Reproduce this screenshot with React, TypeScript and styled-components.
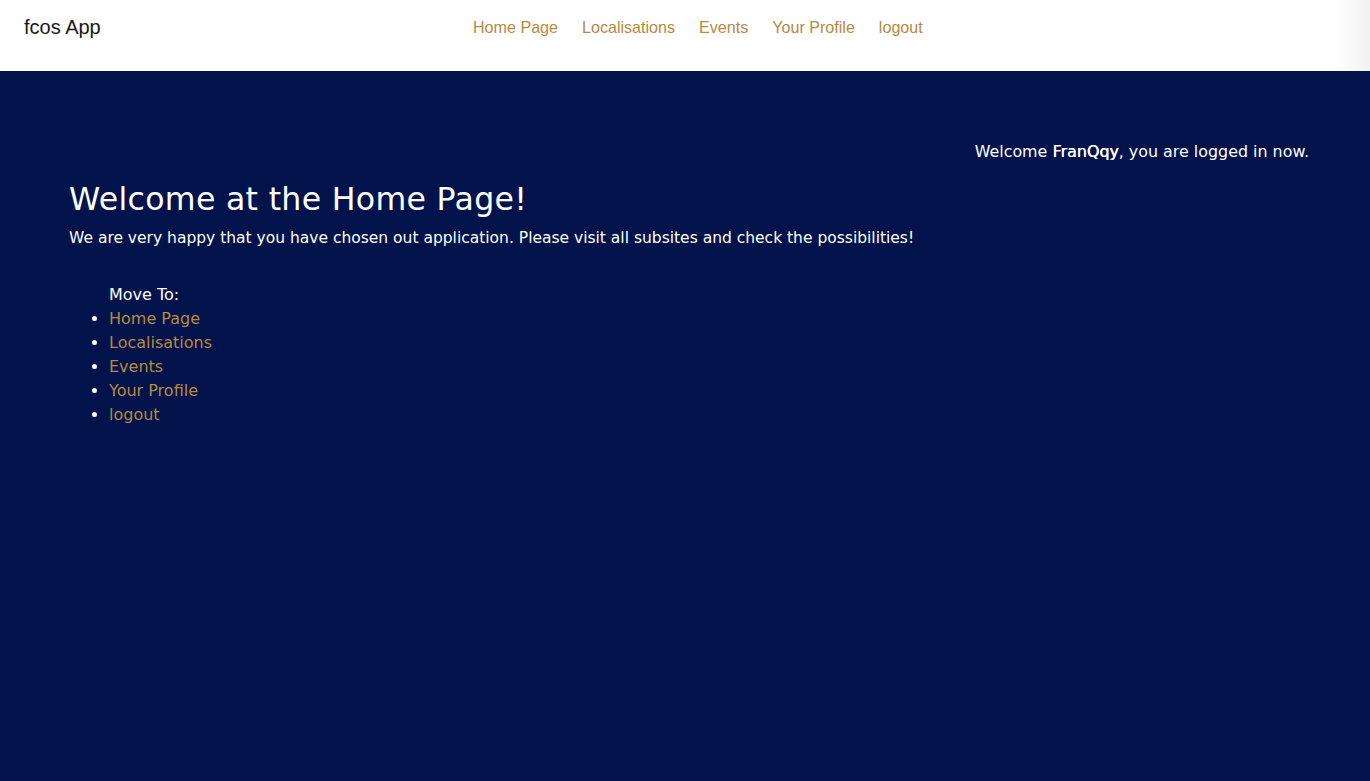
import React from "react";
import styled, { createGlobalStyle } from "styled-components";

const Global = createGlobalStyle`
  html, body { margin: 0; padding: 0; }
  body { background: #02134c; }
  * { box-sizing: border-box; }
`;

const Page = styled.div`
  min-height: 781px;
  display: flex;
  flex-direction: column;
  background: #02134c;
`;

const Header = styled.header`
  height: 71px;
  background: linear-gradient(to right, #ffffff 0, #ffffff 1335px, #f2f2f2 1370px);
  display: flex;
  align-items: center;
  padding: 0 0 0 24px;
  font-family: "Liberation Sans", Arial, sans-serif;
`;

const Brand = styled.div`
  color: #1a1a1a;
  font-size: 20px;
  width: 449px;
  padding-bottom: 16px;
`;

const Nav = styled.nav`
  display: flex;
  gap: 24px;
  padding-bottom: 16px;
`;

const NavLink = styled.a`
  color: #b68a3e;
  font-size: 16.1px;
  text-decoration: none;
`;

const Main = styled.main`
  flex: 1;
  padding: 71px 61px 0 69px;
  font-family: "DejaVu Sans", Verdana, sans-serif;
  color: #ffffff;
`;

const Greeting = styled.div`
  text-align: right;
  font-size: 15.9px;
  line-height: 20px;
`;

const Strong = styled.span`
  font-weight: 400;
  text-shadow: 0.4px 0 0 #ffffff;
`;

const Title = styled.h1`
  margin: 15px 0 0;
  font-weight: 400;
  font-size: 31.6px;
  line-height: 44px;
  letter-spacing: 0.3px;
`;

const Lead = styled.p`
  margin: 5px 0 0;
  font-size: 15.5px;
  line-height: 24px;
`;

const List = styled.ul`
  margin: 33px 0 0;
  padding-left: 40px;
  font-size: 16px;
  line-height: 24px;
`;

const ListHead = styled.div`
  color: #ffffff;
`;

const Item = styled.li`
  color: #ffffff;
`;

const ItemLink = styled.a`
  color: #b68a3e;
  text-decoration: none;
`;

const links = ["Home Page", "Localisations", "Events", "Your Profile", "logout"];

export default function App() {
  return (
    <Page>
      <Global />
      <Header>
        <Brand>fcos App</Brand>
        <Nav>
          {links.map((l) => (
            <NavLink key={l} href="#">{l}</NavLink>
          ))}
        </Nav>
      </Header>
      <Main>
        <Greeting>
          Welcome <Strong>FranQqy</Strong>, you are logged in now.
        </Greeting>
        <Title>Welcome at the Home Page!</Title>
        <Lead>
          We are very happy that you have chosen out application. Please visit all subsites and check the possibilities!
        </Lead>
        <List>
          <ListHead>Move To:</ListHead>
          {links.map((l) => (
            <Item key={l}>
              <ItemLink href="#">{l}</ItemLink>
            </Item>
          ))}
        </List>
      </Main>
    </Page>
  );
}
